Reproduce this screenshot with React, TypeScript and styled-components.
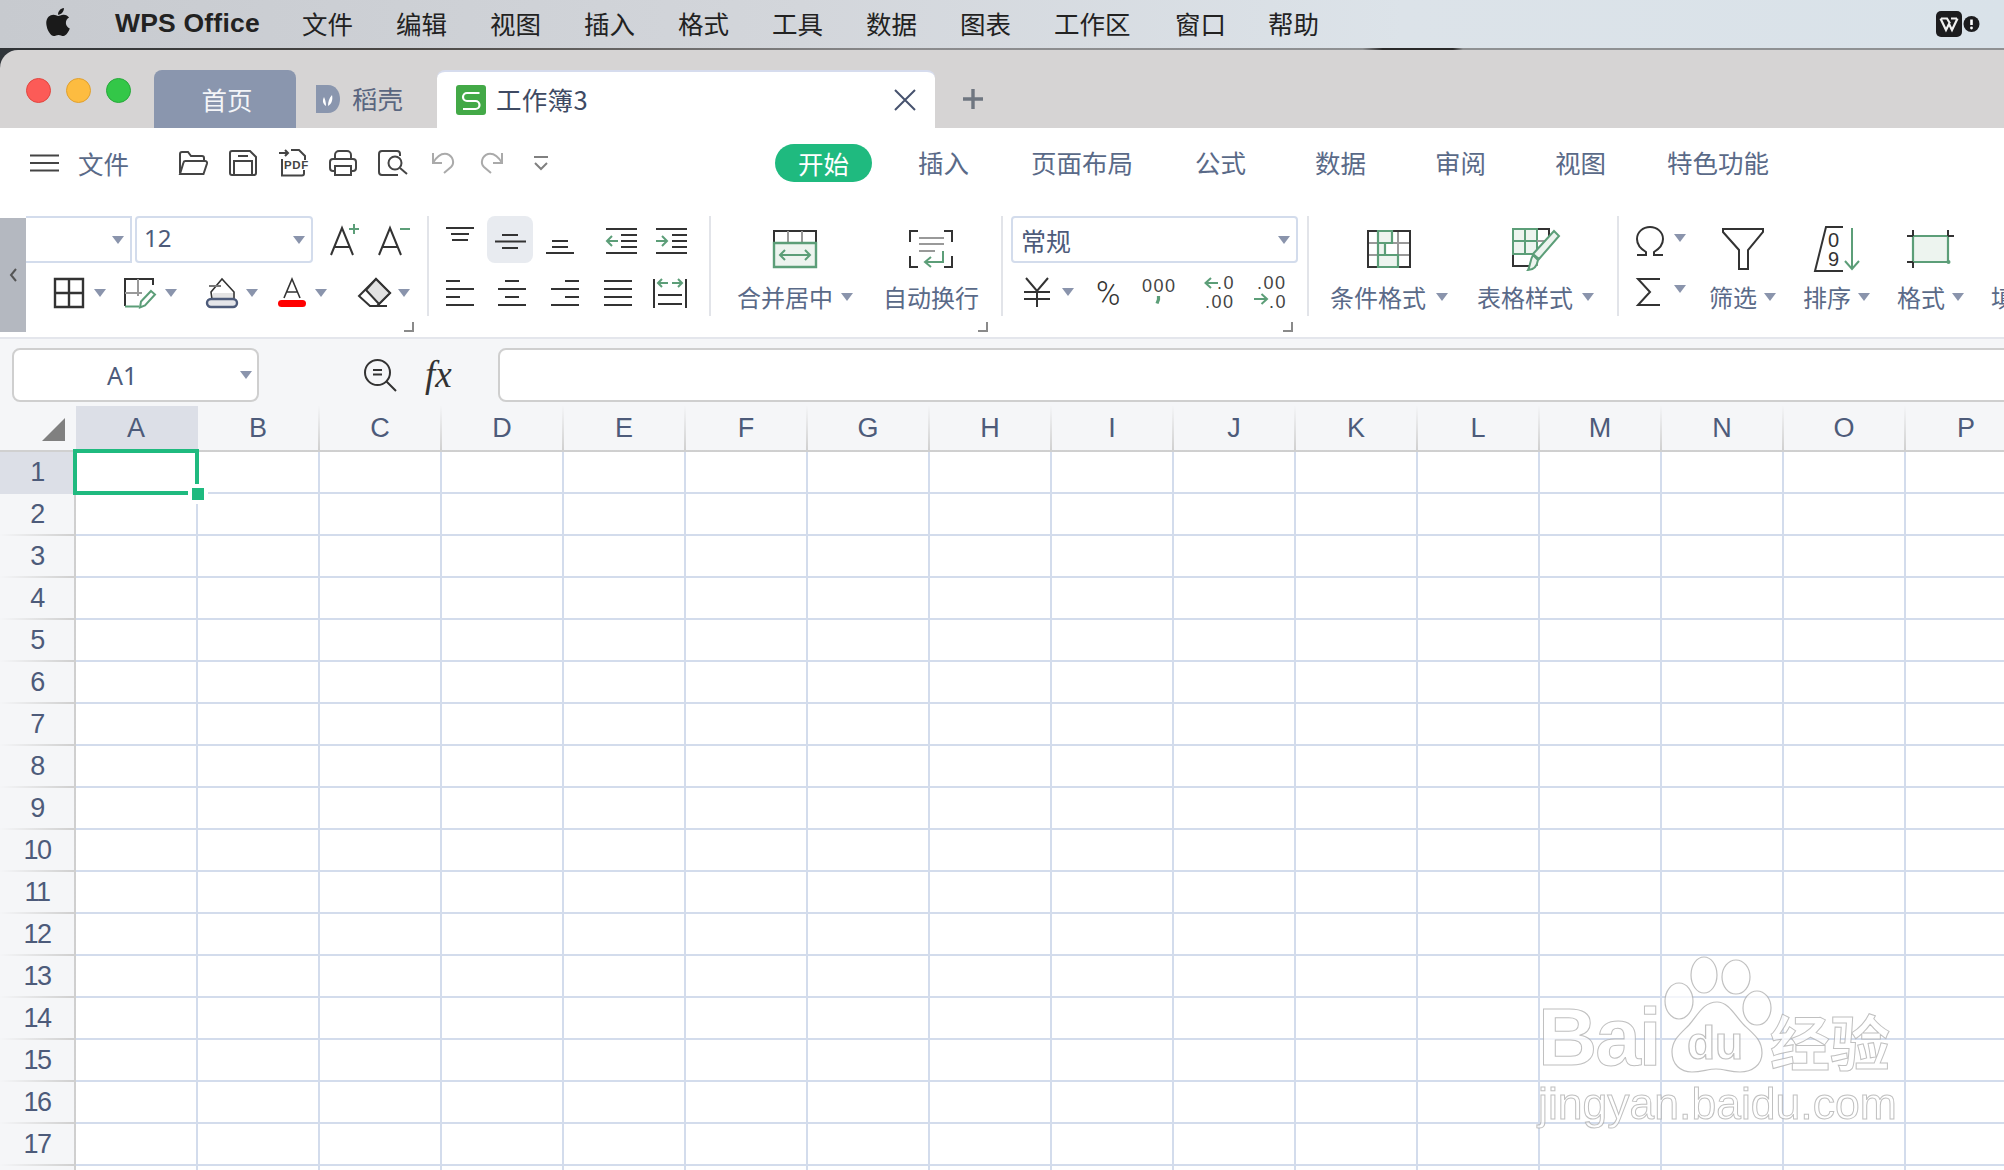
import React from "react";
import styled, { createGlobalStyle } from "styled-components";
import { FaApple } from "react-icons/fa";

const INK = "#333";
const GREEN = "#5c9e78";
const LIGHTG = "#edf4ef";
const TXT = "#5a6a88";
const LATIN = '"Liberation Sans", Arial, sans-serif';

const Global = createGlobalStyle`
  html, body { margin: 0; padding: 0; background: #fff; overflow: hidden; }
  body { font-family: "Noto Sans CJK SC", "Noto Sans", sans-serif; }
  #root { width: 2004px; height: 1170px; overflow: hidden; }
  * { box-sizing: border-box; }
`;

const Page = styled.div`
  position: relative; width: 2004px; height: 1170px; overflow: hidden;
  display: flex; flex-direction: column; background: #fff;
`;

/* ---------- menu bar ---------- */
const MenuBar = styled.div`
  height: 48px; flex: none; display: flex; align-items: center;
  padding-left: 43px; color: #222; font-size: 25.5px;
  background: linear-gradient(90deg, #c7cacf 0%, #d3d6db 40%, #dce3e9 70%, #d9e2e9 100%);
`;
const AppleBox = styled.div`
  width: 30px; height: 32px; display: flex; align-items: center; justify-content: center; margin-right: 42px; color: #1a1a1a;
  svg { margin-top: -4px; }
`;
const AppName = styled.div`
  font-family: ${LATIN}; font-weight: 700; font-size: 26.5px; color: #222; width: 187px; white-space: nowrap; letter-spacing: 0.2px; margin-top: -1px;
`;
const MenuItem = styled.div<{ $w?: number }>`
  width: ${(p) => p.$w ?? 94}px; white-space: nowrap; line-height: 48px; margin-top: -3px;
`;
const MenuEnd = styled.div`
  margin-left: auto; margin-right: 24px; display: flex; align-items: center;
`;
const Divider = styled.div`
  height: 2px; flex: none;
  background: linear-gradient(90deg, #2f3336 0, #4a4744 20%, #8b8b8d 45%, #8f9193 68%, #2a2a2a 69%, #2a2a2a 72.5%, #8f9193 73%, #8f9193 100%);
`;

/* ---------- tab strip ---------- */
const StripBack = styled.div`
  height: 78px; flex: none; background: #30353a;
`;
const Strip = styled.div`
  height: 78px; background: #d6d4d4; border-top-left-radius: 18px; display: flex; align-items: flex-end; padding-left: 26px;
`;
const Lights = styled.div`
  display: flex; gap: 15px; align-self: flex-start; margin-top: 28px; margin-right: 23px;
`;
const Light = styled.div<{ $c: string; $b: string }>`
  width: 25px; height: 25px; border-radius: 50%; background: ${(p) => p.$c}; border: 1px solid ${(p) => p.$b};
`;
const HomeTab = styled.div`
  width: 142px; height: 58px; background: #8a96ae; color: #f4f5f8; border-radius: 8px 8px 0 0;
  font-size: 25.5px; display: flex; align-items: center; justify-content: center; padding-bottom: 2px; padding-left: 4px;
`;
const PlainTab = styled.div`
  width: 141px; height: 58px; display: flex; align-items: center; gap: 12px; padding-left: 20px; color: #5a6680; font-size: 25.5px;
  span { margin-top: -3px; }
`;
const ActiveTab = styled.div`
  width: 498px; height: 58px; background: #fff; border-radius: 8px 8px 0 0; border-top: 2px solid #d6dcee;
  display: flex; align-items: center; padding-left: 19px; padding-right: 19px; color: #3e4a63; font-size: 25.5px;
`;
const TabTitle = styled.div`
  margin-left: 10px; margin-top: -3px; letter-spacing: 0.3px;
`;
const CloseBox = styled.div`
  margin-left: auto; display: flex;
`;
const PlusBox = styled.div`
  margin-left: 28px; align-self: center; margin-top: 20px; display: flex;
`;

/* ---------- svg ---------- */
const Ico = styled.svg.attrs<{ $w: number; $h: number; $ml?: number }>((p) => ({
  viewBox: `0 0 ${p.$w} ${p.$h}`,
  width: p.$w,
  height: p.$h,
}))<{ $w: number; $h: number; $ml?: number }>`
  flex: none; display: block; margin-left: ${(p) => p.$ml ?? 0}px;
  fill: none; stroke: ${INK}; stroke-width: 2; overflow: visible;
  text { stroke: none; fill: ${INK}; font-family: ${LATIN}; }
`;

/* ---------- tab row ---------- */
const TabRow = styled.div`
  height: 70px; flex: none; display: flex; align-items: center; padding-left: 30px; color: ${TXT}; font-size: 25.5px;
`;
const FileLabel = styled.div`
  margin-left: 19px; margin-top: -2px; width: 51px; white-space: nowrap;
`;
const Quick = styled.div`
  display: flex; margin-left: 39px; margin-right: 207px;
`;
const QuickSlot = styled.div`
  width: 50px; height: 36px; display: flex; align-items: center; justify-content: center;
`;
const Pill = styled.div`
  width: 97px; height: 38px; border-radius: 19px; background: #1fba7f; color: #fff; font-size: 25.5px;
  display: flex; align-items: center; justify-content: center; padding-bottom: 2px;
`;
const RibbonTab = styled.div<{ $ml: number }>`
  margin-left: ${(p) => p.$ml}px; margin-top: -2px; white-space: nowrap; line-height: 38px;
`;

/* ---------- ribbon ---------- */
const Ribbon = styled.div`
  height: 141px; flex: none; display: flex; align-items: flex-start; padding-top: 18px; border-bottom: 2px solid #e4e6ec; overflow: hidden;
`;
const Collapse = styled.div`
  width: 26px; height: 114px; margin-top: 2px; background: #b4b8c0; flex: none; display: flex; align-items: center; justify-content: center;
`;
const Group = styled.div<{ $w: number }>`
  width: ${(p) => p.$w}px; height: 116px; flex: none; display: flex; flex-direction: column;
`;
const Sep = styled.div`
  width: 2px; height: 100px; flex: none; background: #e2e4e9;
`;
const Row1 = styled.div`
  height: 47px; display: flex; align-items: center;
`;
const Row2 = styled.div`
  height: 30px; margin-top: 15px; display: flex; align-items: center;
`;
const SelectBox = styled.div<{ $w: number; $ml?: number }>`
  width: ${(p) => p.$w}px; height: 47px; margin-left: ${(p) => p.$ml ?? 0}px; flex: none;
  border: 2px solid #d3dcec; border-radius: 4px; background: #fff; display: flex; align-items: center; padding: 0 6px 0 8px;
  color: #4d5b7a; font-size: 25px; justify-content: space-between;
`;
const FontName = styled(SelectBox)`
  border-left: 0; border-radius: 0;
`;
const SizeValue = styled.span`
  font-family: "Noto Sans", ${LATIN}; font-size: 24px; margin-left: -1px; margin-top: -4px;
`;
const Caret = styled.div<{ $ml?: number; $mt?: number }>`
  flex: none; width: 0; height: 0; margin-left: ${(p) => p.$ml ?? 0}px; margin-top: ${(p) => p.$mt ?? 0}px;
  border-left: 6px solid transparent; border-right: 6px solid transparent; border-top: 8px solid #8a94ac;
`;
const Launcher = styled.div<{ $mr: number }>`
  margin-top: auto; align-self: flex-end; margin-right: ${(p) => p.$mr}px; width: 10px; height: 10px;
  border-right: 2px solid #8a8a8a; border-bottom: 2px solid #8a8a8a;
`;
const HotCell = styled.div<{ $ml: number }>`
  width: 46px; height: 47px; flex: none; margin-left: ${(p) => p.$ml}px; background: #e8ebf0; border-radius: 8px;
`;
const Bigs = styled.div`
  display: flex; align-items: flex-start;
`;
const Big = styled.div<{ $ml: number }>`
  margin-left: ${(p) => p.$ml}px; flex: none; display: flex; flex-direction: column; align-items: center; padding-top: 10px;
`;
const BigLabel = styled.div`
  margin-top: 12px; height: 26px; display: flex; align-items: center; color: ${TXT}; font-size: 24px; line-height: 26px; white-space: nowrap;
`;
const StackCol = styled.div`
  margin-left: 17px; display: flex; flex-direction: column; flex: none;
`;
const StackRow = styled.div<{ $mt: number }>`
  margin-top: ${(p) => p.$mt}px; display: flex; align-items: center;
`;

/* ---------- formula bar ---------- */
const FormulaBar = styled.div`
  height: 67px; flex: none; background: #f5f6f8; display: flex; align-items: center; padding: 5px 0 0 12px;
`;
const NameBox = styled.div`
  width: 247px; height: 54px; flex: none; background: #fff; border: 2px solid #cfcfcf; border-radius: 8px;
  display: flex; align-items: center; justify-content: flex-end; padding-right: 5px;
`;
const NameText = styled.div`
  font-family: "Noto Sans", ${LATIN}; font-size: 25px; color: #4d5b7a; width: 100%; padding-left: 93px;
`;
const Fx = styled.div`
  margin-left: 29px; width: 29px; font-family: "Liberation Serif", serif; font-style: italic; font-size: 37px; color: #333; line-height: 40px; flex: none; white-space: nowrap;
`;
const FormulaInput = styled.div`
  margin-left: 44px; flex: 1; height: 54px; margin-right: -12px; background: #fff; border: 2px solid #cfcfcf; border-radius: 8px;
`;

/* ---------- sheet ---------- */
const Sheet = styled.div`
  flex: 1; min-height: 0; overflow: hidden; display: grid; grid-template-columns: 76px repeat(16, 122px);
  grid-template-rows: 46px; grid-auto-rows: 42px; width: 2028px;
  font-family: ${LATIN}; color: #4d5b7a; font-size: 27px;
`;
const Corner = styled.div`
  background: #f5f6f8; border-right: 2px solid transparent; border-bottom: 2px solid #d0d0d0;
  display: flex; align-items: flex-start; justify-content: flex-end; padding: 12px 9px 0 0;
`;
const ColHead = styled.div<{ $on?: boolean }>`
  background: ${(p) => (p.$on ? "#dcdfe7" : "#f5f6f8")}; border-bottom: 2px solid #d0d0d0;
  border-right: 2px solid transparent; border-image: ${(p) => (p.$on ? "none" : "linear-gradient(180deg, #f5f6f8 0%, #cfcfcf 100%) 1")};
  ${(p) => (p.$on ? "border-right-color: #dcdfe7;" : "")}
  display: flex; align-items: center; justify-content: center; padding-top: 1px;
`;
const RowHead = styled.div<{ $on?: boolean }>`
  background: ${(p) => (p.$on ? "#dcdfe7" : "#f5f6f8")}; border-right: 2px solid #d0d0d0; border-bottom: 2px solid transparent;
  ${(p) => (p.$on ? "border-bottom-color: #dcdfe7;" : "border-image: linear-gradient(90deg, #f5f6f8 0%, #cfcfcf 100%) 1;")}
  display: flex; align-items: center; justify-content: center; letter-spacing: -1.5px;
`;
const Cell = styled.div`
  background: #fff; border-right: 2px solid #d3dcec; border-bottom: 2px solid #d3dcec;
`;
const Selection = styled.div`
  position: absolute; left: 73px; top: 449px; width: 126px; height: 46px; border: 4px solid #1fba7f;
`;
const Handle = styled.div`
  position: absolute; right: -9px; bottom: -9px; width: 12px; height: 12px; background: #1fba7f; box-shadow: 0 0 0 4px #fff;
`;

/* ---------- watermark ---------- */
const Mark = styled.div`
  position: absolute; left: 1536px; top: 955px; width: 372px; color: rgba(255, 255, 255, 0.72); pointer-events: none; filter: blur(0.4px);
  -webkit-text-stroke: 1px rgba(165, 165, 165, 0.7);
`;
const MarkTop = styled.div`
  display: flex; align-items: flex-end; height: 118px;
`;
const MarkBai = styled.div`
  font-family: ${LATIN}; font-weight: 700; font-size: 82px; line-height: 64px; letter-spacing: -2px; width: 125px; flex: none; margin-left: 2px; margin-bottom: 4px; white-space: nowrap;
`;
const MarkCn = styled.div`
  font-weight: 700; font-size: 60px; line-height: 62px; margin-left: -1px; margin-bottom: 2px; white-space: nowrap;
`;
const MarkDomain = styled.div`
  font-family: ${LATIN}; font-size: 44.5px; line-height: 48px; margin-top: 7px; margin-left: 2px; white-space: nowrap;
`;
const Paw = styled.svg`
  flex: none; width: 108px; height: 118px; display: block; overflow: visible;
  fill: rgba(255, 255, 255, 0.72); stroke: rgba(165, 165, 165, 0.7); stroke-width: 1.2;
  text { font-family: ${LATIN}; font-weight: 700; font-size: 46px; }
`;

const COLS = "ABCDEFGHIJKLMNOP".split("");
const ROWS = Array.from({ length: 18 }, (_, i) => i + 1);

export default function App() {
  return (
    <Page>
      <Global />
      <MenuBar>
        <AppleBox><FaApple size={32} /></AppleBox>
        <AppName>WPS Office</AppName>
        <MenuItem>文件</MenuItem><MenuItem>编辑</MenuItem><MenuItem>视图</MenuItem><MenuItem>插入</MenuItem>
        <MenuItem>格式</MenuItem><MenuItem>工具</MenuItem><MenuItem>数据</MenuItem><MenuItem>图表</MenuItem>
        <MenuItem $w={121}>工作区</MenuItem><MenuItem $w={93}>窗口</MenuItem><MenuItem>帮助</MenuItem>
        <MenuEnd>
          <Ico $w={26} $h={26}>
            <rect x="0" y="0" width="26" height="26" rx="5" fill="#1c1c1e" stroke="none" />
            <path d="M4.500 7.500L10 19l3-6 3 6 5.500-11.500M5 7.500h6l3 5M15 7.500h6" stroke="#f0f0f0" strokeWidth="2.2" />
          </Ico>
          <Ico $w={17} $h={16} $ml={1}>
            <circle cx="8.5" cy="8" r="8" fill="#1c1c1e" stroke="none" />
            <path d="M8.5 3.500v5.500" stroke="#fff" strokeWidth="2.6" />
            <circle cx="8.5" cy="12" r="1.4" fill="#fff" stroke="none" />
          </Ico>
        </MenuEnd>
      </MenuBar>
      <Divider />

      <StripBack>
        <Strip>
          <Lights>
            <Light $c="#fc5b57" $b="#e2463f" />
            <Light $c="#fdbc40" $b="#e0a02e" />
            <Light $c="#33c748" $b="#27a93a" />
          </Lights>
          <HomeTab>首页</HomeTab>
          <PlainTab>
            <Ico $w={24} $h={28}>
              <path d="M0 0h12c8 0 12 7 12 14s-4 14-12 14H0z" fill="#8a96ae" stroke="none" />
              <path d="M10 21c-3-2-4-5-2-9 1 2 2 5 2 9zm2 0c0-4 1-8 4-11 1 4 0 9-4 11z" fill="#fff" stroke="none" />
            </Ico>
            <span>稻壳</span>
          </PlainTab>
          <ActiveTab>
            <Ico $w={30} $h={30}>
              <rect width="30" height="30" rx="3" fill="#43a947" stroke="none" />
              <path d="M23.500 8H11a4 4 0 0 0 0 8h8.500a4 4 0 0 1 0 8H7" stroke="#fff" strokeWidth="2.2" />
            </Ico>
            <TabTitle>工作簿3</TabTitle>
            <CloseBox>
              <Ico $w={22} $h={20}>
                <path d="M1 0l20 20M21 0L1 20" stroke="#46526e" strokeWidth="2" />
              </Ico>
            </CloseBox>
          </ActiveTab>
          <PlusBox>
            <Ico $w={20} $h={20}>
              <path d="M10 0v20M0 10h20" stroke="#6f7680" strokeWidth="3.4" />
            </Ico>
          </PlusBox>
        </Strip>
      </StripBack>

      <TabRow>
        <Ico $w={29} $h={18}>
          <path d="M0 1.500h29M0 9h29M0 16.500h29" stroke="#444" strokeWidth="2" />
        </Ico>
        <FileLabel>文件</FileLabel>
        <Quick>
          <QuickSlot>
            <Ico $w={30} $h={24}>
              <path d="M2 22V3a2 2 0 0 1 2-2h6l3 4h11a2 2 0 0 1 2 2v3" stroke="#444" />
              <path d="M2 23L5.500 11.500a2 2 0 0 1 2-1.500H27a2 2 0 0 1 2 2.500L25.500 23z" stroke="#444" />
            </Ico>
          </QuickSlot>
          <QuickSlot>
            <Ico $w={28} $h={26}>
              <path d="M3 1h18l6 6v16a2 2 0 0 1-2 2H3a2 2 0 0 1-2-2V3a2 2 0 0 1 2-2z" stroke="#444" />
              <path d="M9 6h10M5 25V11h18v14" stroke="#444" />
            </Ico>
          </QuickSlot>
          <QuickSlot>
            <Ico $w={28} $h={28}>
              <path d="M0 4h9M6 1l3 3-3 3M12 1h8l6 6v4M3 10v16.500h20a2 2 0 0 0 2-2V21" stroke="#444" />
              <text x="5" y="20" fontSize="11.500" fontWeight="700" letterSpacing="0.6" style={{ fill: "#444" }}>PDF</text>
            </Ico>
          </QuickSlot>
          <QuickSlot>
            <Ico $w={28} $h={26}>
              <path d="M6 9V5a4 4 0 0 1 4-4h8a4 4 0 0 1 4 4v4" stroke="#444" />
              <path d="M6 21H4a3 3 0 0 1-3-3v-6a3 3 0 0 1 3-3h20a3 3 0 0 1 3 3v6a3 3 0 0 1-3 3h-2" stroke="#444" />
              <path d="M6 16h16v9H6z" stroke="#444" />
            </Ico>
          </QuickSlot>
          <QuickSlot>
            <Ico $w={30} $h={26}>
              <path d="M22 6V4a3 3 0 0 0-3-3H4a3 3 0 0 0-3 3v18a3 3 0 0 0 3 3h16" stroke="#444" />
              <circle cx="17" cy="13" r="6.500" stroke="#444" />
              <path d="M22 18l7 6" stroke="#444" />
            </Ico>
          </QuickSlot>
          <QuickSlot>
            <Ico $w={23} $h={22}>
              <path d="M1 1v10h9M1 11c4-7 9-10 14-9 6 2 8 9 4 13l-7 6" stroke="#aaa" />
            </Ico>
          </QuickSlot>
          <QuickSlot>
            <Ico $w={23} $h={22} $ml={-4}>
              <path d="M22 1v10h-9M22 11C18 4 13 1 8 2 2 4 0 11 4 15l7 6" stroke="#aaa" />
            </Ico>
          </QuickSlot>
          <QuickSlot>
            <Ico $w={14} $h={14} $ml={-4}>
              <path d="M0 1h14M1 7l6 6 6-6" stroke="#808080" />
            </Ico>
          </QuickSlot>
        </Quick>
        <Pill>开始</Pill>
        <RibbonTab $ml={46}>插入</RibbonTab>
        <RibbonTab $ml={62}>页面布局</RibbonTab>
        <RibbonTab $ml={62}>公式</RibbonTab>
        <RibbonTab $ml={69}>数据</RibbonTab>
        <RibbonTab $ml={69}>审阅</RibbonTab>
        <RibbonTab $ml={69}>视图</RibbonTab>
        <RibbonTab $ml={61}>特色功能</RibbonTab>
      </TabRow>

      <Ribbon>
        <Collapse>
          <Ico $w={8} $h={14}>
            <path d="M7 1L2 7l5 6" stroke="#555" />
          </Ico>
        </Collapse>
        <Group $w={401}>
          <Row1>
            <FontName $w={106}><span /><Caret /></FontName>
            <SelectBox $w={178} $ml={3}><SizeValue>12</SizeValue><Caret /></SelectBox>
            <Ico $w={30} $h={32} $ml={17}>
              <path d="M1 31L12 4l11 27M5 23h14" />
              <path d="M19 5h10M24 0v10" stroke={GREEN} />
            </Ico>
            <Ico $w={32} $h={32} $ml={18}>
              <path d="M1 31L12 4l11 27M5 23h14" />
              <path d="M22 5h10" stroke={GREEN} />
            </Ico>
          </Row1>
          <Row2>
            <Ico $w={30} $h={30} $ml={28}>
              <path d="M1 1h28v28H1zM15 1v28M1 15h28" strokeWidth="2.4" />
            </Ico>
            <Caret $ml={10} />
            <Ico $w={32} $h={30} $ml={18}>
              <path d="M1 28V1h28v6" />
              <path d="M1 15h17M14 1v17" stroke="#999" />
              <path d="M1 28.500h14" stroke={GREEN} />
              <path d="M27 13l4 3.500-10 11-5 2 1-6z" stroke={GREEN} />
            </Ico>
            <Caret $ml={9} />
            <Ico $w={32} $h={30} $ml={29}>
              <path d="M5 14l11-13 12 13v7H6z" fill="#fff" strokeWidth="1.6" />
              <path d="M7 15h20v6H7z" fill="#e4e4e4" stroke="none" />
              <path d="M3 8h12" stroke="#777" />
              <rect x="1" y="21" width="30" height="8" rx="4" fill="#e5e6ea" stroke="#4d5b7a" strokeWidth="2.4" />
            </Ico>
            <Caret $ml={8} />
            <Ico $w={28} $h={30} $ml={20}>
              <path d="M6 20L14 1l8 19M8.500 14h11" strokeWidth="1.6" />
              <rect x="0" y="22" width="28" height="7" rx="3.500" fill="#f00" stroke="none" />
            </Ico>
            <Caret $ml={9} />
            <Ico $w={32} $h={30} $ml={31}>
              <path d="M18 1l14 14-13 13h-7L1 18z" fill="#fff" />
              <path d="M18 1l14 14-11 11L8 12z" fill="#e2e2e2" />
              <path d="M13 28h16" />
            </Ico>
            <Caret $ml={8} />
          </Row2>
          <Launcher $mr={13} />
        </Group>
        <Sep />
        <Group $w={280}>
          <Row1>
            <Ico $w={46} $h={47} $ml={8}>
              <path d="M9 12h28M14 18h18M15 24h16" />
            </Ico>
            <HotCell $ml={4}>
              <Ico $w={46} $h={47}>
                <path d="M15 19h16M8 25.500h31M15 32h16" />
              </Ico>
            </HotCell>
            <Ico $w={46} $h={47} $ml={4}>
              <path d="M15 25h16M15 31h16M9 37h28" />
            </Ico>
            <Ico $w={46} $h={47} $ml={15}>
              <path d="M8 13h31M23 19h16M23 25h16M23 31h16M8 37h31" />
              <path d="M20 25H9M14 20l-5 5 5 5" stroke={GREEN} />
            </Ico>
            <Ico $w={46} $h={47} $ml={5}>
              <path d="M7 13h31M23 19h15M23 25h15M23 31h15M7 37h31" />
              <path d="M7 25h11M13 20l5 5-5 5" stroke={GREEN} />
            </Ico>
          </Row1>
          <Row2>
            <Ico $w={46} $h={30} $ml={8}>
              <path d="M9 3h14M9 11h28M9 19h14M9 27h28" />
            </Ico>
            <Ico $w={46} $h={30} $ml={6}>
              <path d="M16 3h14M9 11h28M16 19h14M9 27h28" />
            </Ico>
            <Ico $w={46} $h={30} $ml={7}>
              <path d="M23 3h14M9 11h28M23 19h14M9 27h28" />
            </Ico>
            <Ico $w={46} $h={30} $ml={7}>
              <path d="M9 3h28M9 11h28M9 19h28M9 27h28" />
            </Ico>
            <Ico $w={46} $h={30} $ml={6}>
              <path d="M7 1v29M39 1v29M11 17h24M11 26h24" />
              <path d="M12 5h9M15 1l-4 4 4 4M25 5h9M31 1l4 4-4 4" stroke={GREEN} />
            </Ico>
          </Row2>
        </Group>
        <Sep />
        <Group $w={290}>
          <Bigs>
            <Big $ml={26}>
              <Ico $w={44} $h={46}>
                <path d="M1 17V5h42v12" />
                <path d="M15 5v12M29 5v12" stroke="#999" />
                <path d="M1 17h42v24H1z" fill={LIGHTG} stroke={GREEN} strokeWidth="2.4" />
                <path d="M7 29h30M12 24l-5 5 5 5M32 24l5 5-5 5" stroke={GREEN} />
              </Ico>
              <BigLabel>合并居中<Caret $ml={8} /></BigLabel>
            </Big>
            <Big $ml={30}>
              <Ico $w={44} $h={46}>
                <path d="M9 5H1v11M35 5h8v11M1 30v11h8M43 30v11h-8" />
                <path d="M10 12h25M10 18h25M10 25h16" stroke="#999" />
                <path d="M34 25v11H17M22 31l-6 5 6 5" stroke={GREEN} />
              </Ico>
              <BigLabel>自动换行</BigLabel>
            </Big>
          </Bigs>
          <Launcher $mr={13} />
        </Group>
        <Sep />
        <Group $w={304}>
          <Row1>
            <SelectBox $w={287} $ml={8}>常规<Caret /></SelectBox>
          </Row1>
          <Row2>
            <Ico $w={26} $h={30} $ml={21}>
              <path d="M2 0l11 13L24 0M13 13v16M0 14h26M0 21h26" />
            </Ico>
            <Caret $ml={12} $mt={-2} />
            <Ico $w={26} $h={30} $ml={21}>
              <text x="1" y="27" fontSize="33" fontWeight="300" style={{ fontFamily: "Roboto, sans-serif" }}>%</text>
            </Ico>
            <Ico $w={34} $h={34} $ml={21}>
              <text x="0" y="16" fontSize="18" letterSpacing="1.5" style={{ fill: "#444" }}>000</text>
              <path d="M16.500 20v3.500l-1.500 4" stroke={GREEN} strokeWidth="3.2" />
            </Ico>
            <Ico $w={32} $h={34} $ml={28}>
              <path d="M14 7H2M7 2L1.500 7 7 12" stroke={GREEN} />
              <text x="13" y="13" fontSize="18" letterSpacing="1.5" style={{ fill: "#444" }}>.0</text>
              <text x="1" y="32" fontSize="18" letterSpacing="1.5" style={{ fill: "#444" }}>.00</text>
            </Ico>
            <Ico $w={30} $h={34} $ml={18}>
              <text x="3" y="13" fontSize="18" letterSpacing="1.5" style={{ fill: "#444" }}>.00</text>
              <path d="M0 23h12M7.500 18l5.500 5-5.500 5" stroke={GREEN} />
              <text x="15" y="32" fontSize="18" letterSpacing="1.5" style={{ fill: "#444" }}>.0</text>
            </Ico>
          </Row2>
          <Launcher $mr={14} />
        </Group>
        <Sep />
        <Group $w={308}>
          <Bigs>
            <Big $ml={21}>
              <Ico $w={44} $h={46}>
                <path d="M1 17h42M1 29h42M11 5v36M31 5v36" stroke="#999" />
                <path d="M1 5h42v36H1z" />
                <path d="M11 5h14v12h-7v12h13v12H11z" fill={LIGHTG} stroke={GREEN} strokeWidth="2.2" />
                <path d="M18 17h-7M18 29h-7" stroke={GREEN} />
              </Ico>
              <BigLabel>条件格式<Caret $ml={10} /></BigLabel>
            </Big>
            <Big $ml={29}>
              <Ico $w={48} $h={46}>
                <path d="M25 3h12v14M1 28v12h16" />
                <path d="M1 3h24v25H1zM1 15h24M13 3v25" fill={LIGHTG} stroke={GREEN} strokeWidth="2" />
                <path d="M25 15h12M25 28v12" stroke="#999" />
                <path d="M42 5l5 5-20 23-6-5zM21 29l5 5c-1 6-4 10-10 10 2-3 2-10 5-15z" fill={LIGHTG} stroke={GREEN} />
              </Ico>
              <BigLabel>表格样式<Caret $ml={9} /></BigLabel>
            </Big>
          </Bigs>
        </Group>
        <Sep />
        <StackCol>
          <StackRow $mt={10}>
            <Ico $w={28} $h={30}>
              <path d="M1 29h9v-3c-5-3-9-7-9-13C1 6 7 1 14 1s13 5 13 12c0 6-4 10-9 13v3h9" />
            </Ico>
            <Caret $ml={10} $mt={-6} />
          </StackRow>
          <StackRow $mt={22}>
            <Ico $w={28} $h={28}>
              <path d="M24 1H2l12 13L2 27h22" />
            </Ico>
            <Caret $ml={10} $mt={-6} />
          </StackRow>
        </StackCol>
        <Big $ml={23}>
          <Ico $w={42} $h={46}>
            <path d="M1 3h40v3L26 24v19h-9V24L1 6z" />
          </Ico>
          <BigLabel>筛选<Caret $ml={7} /></BigLabel>
        </Big>
        <Big $ml={27}>
          <Ico $w={46} $h={46}>
            <path d="M29 1H12L1 45h28" />
            <text x="14" y="21" fontSize="20">0</text>
            <text x="14" y="40" fontSize="20">9</text>
            <path d="M38 2v41M31 35l7 8 7-8" stroke={GREEN} />
          </Ico>
          <BigLabel>排序<Caret $ml={7} /></BigLabel>
        </Big>
        <Big $ml={27}>
          <Ico $w={47} $h={46}>
            <path d="M6 10h35v26H6z" fill={LIGHTG} stroke={GREEN} strokeWidth="2.2" />
            <path d="M0 10h6M6 4v6M41 4v6M41 10h6M0 36h6M6 36v6" />
            <circle cx="41.500" cy="36" r="2" fill={GREEN} stroke="none" />
          </Ico>
          <BigLabel>格式<Caret $ml={7} /></BigLabel>
        </Big>
        <Big $ml={27}>
          <Ico $w={44} $h={46}>
            <path d="M15 4H11a2 2 0 0 0-2 2v34a2 2 0 0 0 2 2h4" />
          </Ico>
          <BigLabel>填充<Caret $ml={10} /></BigLabel>
        </Big>
      </Ribbon>

      <FormulaBar>
        <NameBox>
          <NameText>A1</NameText>
          <Caret />
        </NameBox>
        <Ico $w={32} $h={32} $ml={105}>
          <circle cx="13.500" cy="13.500" r="12.500" stroke="#333" />
          <path d="M9 11h9M9 15.500h9M22 22l10 10" stroke="#333" />
        </Ico>
        <Fx>fx</Fx>
        <FormulaInput />
      </FormulaBar>

      <Sheet>
        <Corner>
          <Ico $w={23} $h={23}>
            <path d="M23 0v23H0z" fill="#808080" stroke="none" />
          </Ico>
        </Corner>
        {COLS.map((c, i) => (
          <ColHead key={c} $on={i === 0}>{c}</ColHead>
        ))}
        {ROWS.map((r) => (
          <React.Fragment key={r}>
            <RowHead $on={r === 1}>{r < 18 ? r : ""}</RowHead>
            {COLS.map((c) => (
              <Cell key={c} />
            ))}
          </React.Fragment>
        ))}
      </Sheet>

      <Selection><Handle /></Selection>

      <Mark>
        <MarkTop>
          <MarkBai>Bai</MarkBai>
          <Paw viewBox="0 0 108 118">
            <ellipse cx="16" cy="46" rx="14" ry="18" />
            <ellipse cx="41" cy="20" rx="13" ry="18" />
            <ellipse cx="73" cy="22" rx="14" ry="17" />
            <ellipse cx="94" cy="53" rx="14" ry="17" />
            <path d="M54 47c12 0 18 14 28 24 10 9 17 15 17 27 0 12-10 19-22 19-10 0-16-3-24-3-8 0-14 3-24 3-12 0-20-8-20-20 0-12 8-18 17-27 9-10 14-23 28-23z" />
            <text x="52" y="104" textAnchor="middle">du</text>
          </Paw>
          <MarkCn>经验</MarkCn>
        </MarkTop>
        <MarkDomain>jingyan.baidu.com</MarkDomain>
      </Mark>
    </Page>
  );
}
